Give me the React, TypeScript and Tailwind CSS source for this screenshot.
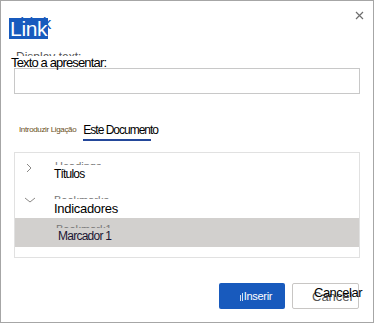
import React from "react";

const ChevronRight = () => (
  <svg width="10" height="10" viewBox="0 0 10 10" fill="none">
    <path d="M3 1l4 4-4 4" stroke="#8a8886" strokeWidth="1" />
  </svg>
);

const ChevronDown = () => (
  <svg width="12" height="10" viewBox="0 0 12 10" fill="none">
    <path d="M1 3l5 4 5-4" stroke="#8a8886" strokeWidth="1" />
  </svg>
);

const App = () => {
  return (
    <div className="w-[375px] h-[323px] bg-white font-['Liberation_Sans',Arial,sans-serif]">
      <div className="w-[374px] h-[323px] border border-[#a6a6a6] flex flex-col">
        {/* header */}
        <div className="flex justify-between items-start pl-[8px] pr-[9px] pt-[17px] h-[40px] leading-[21px]">
          <div className="relative">
            <span className="absolute left-[11px] top-[-3px] text-[17px] leading-[18px] text-[#185abd]">
              Link
            </span>
            <span className="relative inline-block bg-[#185abd] text-white text-[21px] leading-[21px] px-[1px] tracking-[-0.3px]">
              Link
            </span>
          </div>
          <button className="mt-[-7px] text-[#707070]">
            <svg width="9" height="9" viewBox="0 0 9 9">
              <path d="M1 1l7 7M8 1L1 8" stroke="#6e6e6e" strokeWidth="1.2" />
            </svg>
          </button>
        </div>

        {/* display text */}
        <div className="relative pl-[10px] pt-[15px]">
          <span className="absolute left-[15px] top-[9px] h-[6px] overflow-hidden text-[12px] leading-[14px] text-[#555]">
            Display text:
          </span>
          <label className="relative block text-[13px] leading-[14px] tracking-[-0.85px] text-black">
            Texto a apresentar:
          </label>
        </div>
        <div className="pl-[13px] mt-[-2px]">
          <div className="w-[346px] h-[26px] border border-[#c8c8c8] bg-white" />
        </div>

        {/* tabs */}
        <div className="flex items-end gap-[7px] pl-[18px] mt-[28px] h-[19px]">
          <span className="text-[8px] leading-[12px] text-[#6b4f24] tracking-[-0.35px] pb-[5px]">
            Introduzir Ligação
          </span>
          <div className="flex flex-col">
            <span className="text-[12px] leading-[14px] tracking-[-1px] text-black">Este Documento</span>
            <div className="mt-[2px] w-[68px] h-[2px] bg-[#23479a]" />
          </div>
        </div>

        {/* list */}
        <div className="pl-[13px] mt-[11px]">
          <div className="w-[346px] h-[106px] border border-[#e1e1e1] flex flex-col">
            <div className="h-[33px] flex items-center pl-[9px]">
              <span className="w-[30px] flex mt-[-4px]">
                <ChevronRight />
              </span>
              <span className="relative text-[12px] leading-[14px] tracking-[-0.8px] text-black mt-[8px]">
                <span className="absolute left-[1px] top-[-7px] text-[11px] tracking-normal text-[#777] h-[5px] overflow-hidden leading-[12px]">
                  Headings
                </span>
                Títulos
              </span>
            </div>
            <div className="h-[32px] flex items-center pl-[9px]">
              <span className="w-[30px] flex mt-[-4px]">
                <ChevronDown />
              </span>
              <span className="relative text-[13px] leading-[15px] tracking-[-0.3px] text-black mt-[12px]">
                <span className="absolute left-[0px] top-[-7px] text-[11px] tracking-normal text-[#777] h-[5px] overflow-hidden leading-[12px]">
                  Bookmarks
                </span>
                Indicadores
              </span>
            </div>
            <div className="h-[29px] bg-[#d2d0ce] flex items-center pl-[43px]">
              <span className="relative text-[12px] leading-[14px] tracking-[-0.75px] text-[#1b1633] mt-[6px]">
                <span className="absolute left-[-2px] top-[-6px] text-[11px] tracking-normal text-[#777] h-[5px] overflow-hidden leading-[12px]">
                  Bookmark1
                </span>
                Marcador 1
              </span>
            </div>
          </div>
        </div>

        {/* buttons */}
        <div className="flex justify-end gap-[7px] pr-[14px] mt-[25px]">
          <button className="w-[66px] h-[26px] bg-[#185abd] rounded-[2px] text-white text-[11px] tracking-[-0.3px] flex items-center justify-center gap-[1px] pl-[8px]">
            <span className="flex items-end gap-[1px] h-[10px] pt-[2px]">
              <span className="w-[1px] h-[6px] bg-white/80" />
              <span className="w-[1px] h-[8px] bg-white/80" />
            </span>
            Inserir
          </button>
          <button className="relative w-[67px] h-[26px] bg-white border border-[#c8c6c4] rounded-[2px]">
            <span className="absolute left-[19px] top-[6px] text-[13px] leading-[14px] text-[#555]">
              Cancel
            </span>
            <span className="absolute left-[21px] top-[2px] text-[13px] leading-[14px] tracking-[-0.5px] text-black whitespace-nowrap">
              Cancelar
            </span>
          </button>
        </div>
      </div>
    </div>
  );
};

export default App;
